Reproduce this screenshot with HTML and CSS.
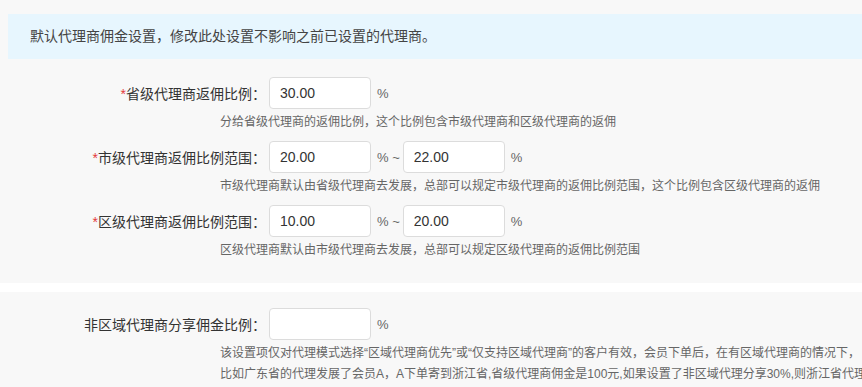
FILE: index.html
```html
<!DOCTYPE html>
<html lang="zh-CN">
<head>
    <meta charset="UTF-8">
    <meta name="viewport" content="width=device-width, initial-scale=1.0">
    <title>代理商佣金设置</title>
    <link rel="stylesheet" href="styles.css">
</head>
<body>
    <div class="panel panel-first">
        <div class="notice">默认代理商佣金设置，修改此处设置不影响之前已设置的代理商。</div>

        <div class="form-group">
            <div class="form-row">
                <label class="form-label"><span class="required">*</span>省级代理商返佣比例：</label>
                <input type="text" class="form-input" value="30.00">
                <span class="unit">%</span>
            </div>
            <div class="help">分给省级代理商的返佣比例，这个比例包含市级代理商和区级代理商的返佣</div>
        </div>

        <div class="form-group">
            <div class="form-row">
                <label class="form-label"><span class="required">*</span>市级代理商返佣比例范围：</label>
                <input type="text" class="form-input" value="20.00">
                <span class="unit">% ~</span>
                <input type="text" class="form-input" value="22.00">
                <span class="unit">%</span>
            </div>
            <div class="help">市级代理商默认由省级代理商去发展，总部可以规定市级代理商的返佣比例范围，这个比例包含区级代理商的返佣</div>
        </div>

        <div class="form-group">
            <div class="form-row">
                <label class="form-label"><span class="required">*</span>区级代理商返佣比例范围：</label>
                <input type="text" class="form-input" value="10.00">
                <span class="unit">% ~</span>
                <input type="text" class="form-input" value="20.00">
                <span class="unit">%</span>
            </div>
            <div class="help">区级代理商默认由市级代理商去发展，总部可以规定区级代理商的返佣比例范围</div>
        </div>
    </div>

    <div class="panel panel-second">
        <div class="form-group">
            <div class="form-row">
                <label class="form-label">非区域代理商分享佣金比例：</label>
                <input type="text" class="form-input" value="">
                <span class="unit">%</span>
            </div>
            <div class="help">
                <p>该设置项仅对代理模式选择“区域代理商优先”或“仅支持区域代理商”的客户有效，会员下单后，在有区域代理商的情况下，</p>
                <p>比如广东省的代理发展了会员A，A下单寄到浙江省,省级代理商佣金是100元,如果设置了非区域代理分享30%,则浙江省代理</p>
            </div>
        </div>
    </div>
</body>
</html>
```

FILE: styles.css
```css
body {
    margin: 0;
    padding: 0;
    background-color: #fff;
    font-family: "Liberation Sans", "Noto Sans CJK SC", sans-serif;
    font-size: 14px;
    color: #333;
    overflow: hidden;
}

.panel {
    background-color: #f8f8f8;
    white-space: nowrap;
    overflow: hidden;
}

.panel-first {
    padding: 14px 0 14px 8px;
}

.panel-second {
    margin-top: 9px;
    padding: 16px 0 20px 8px;
}

.notice {
    background-color: #e7f6fe;
    height: 45px;
    line-height: 45px;
    padding-left: 22px;
    margin-bottom: 18px;
    color: #444;
}

.form-group {
    margin-bottom: 9px;
}

.form-row {
    display: flex;
    align-items: center;
    height: 32px;
}

.form-label {
    width: 258px;
    margin-right: 3px;
    text-align: right;
    color: #333;
}

.required {
    color: #e4393c;
}

.form-input {
    box-sizing: border-box;
    width: 102px;
    height: 32px;
    padding: 0 10px;
    border: 1px solid #dcdcdc;
    border-radius: 4px;
    background-color: #fff;
    font-family: "Liberation Sans", sans-serif;
    font-size: 14px;
    color: #333;
    outline: none;
}

.unit {
    margin: 0 3px 0 6px;
    font-size: 13px;
    color: #666;
}

.help {
    margin-top: 3px;
    padding-left: 212px;
    font-size: 12px;
    line-height: 20px;
    color: #666;
}

.help p {
    margin: 0;
    line-height: 21px;
}
```
